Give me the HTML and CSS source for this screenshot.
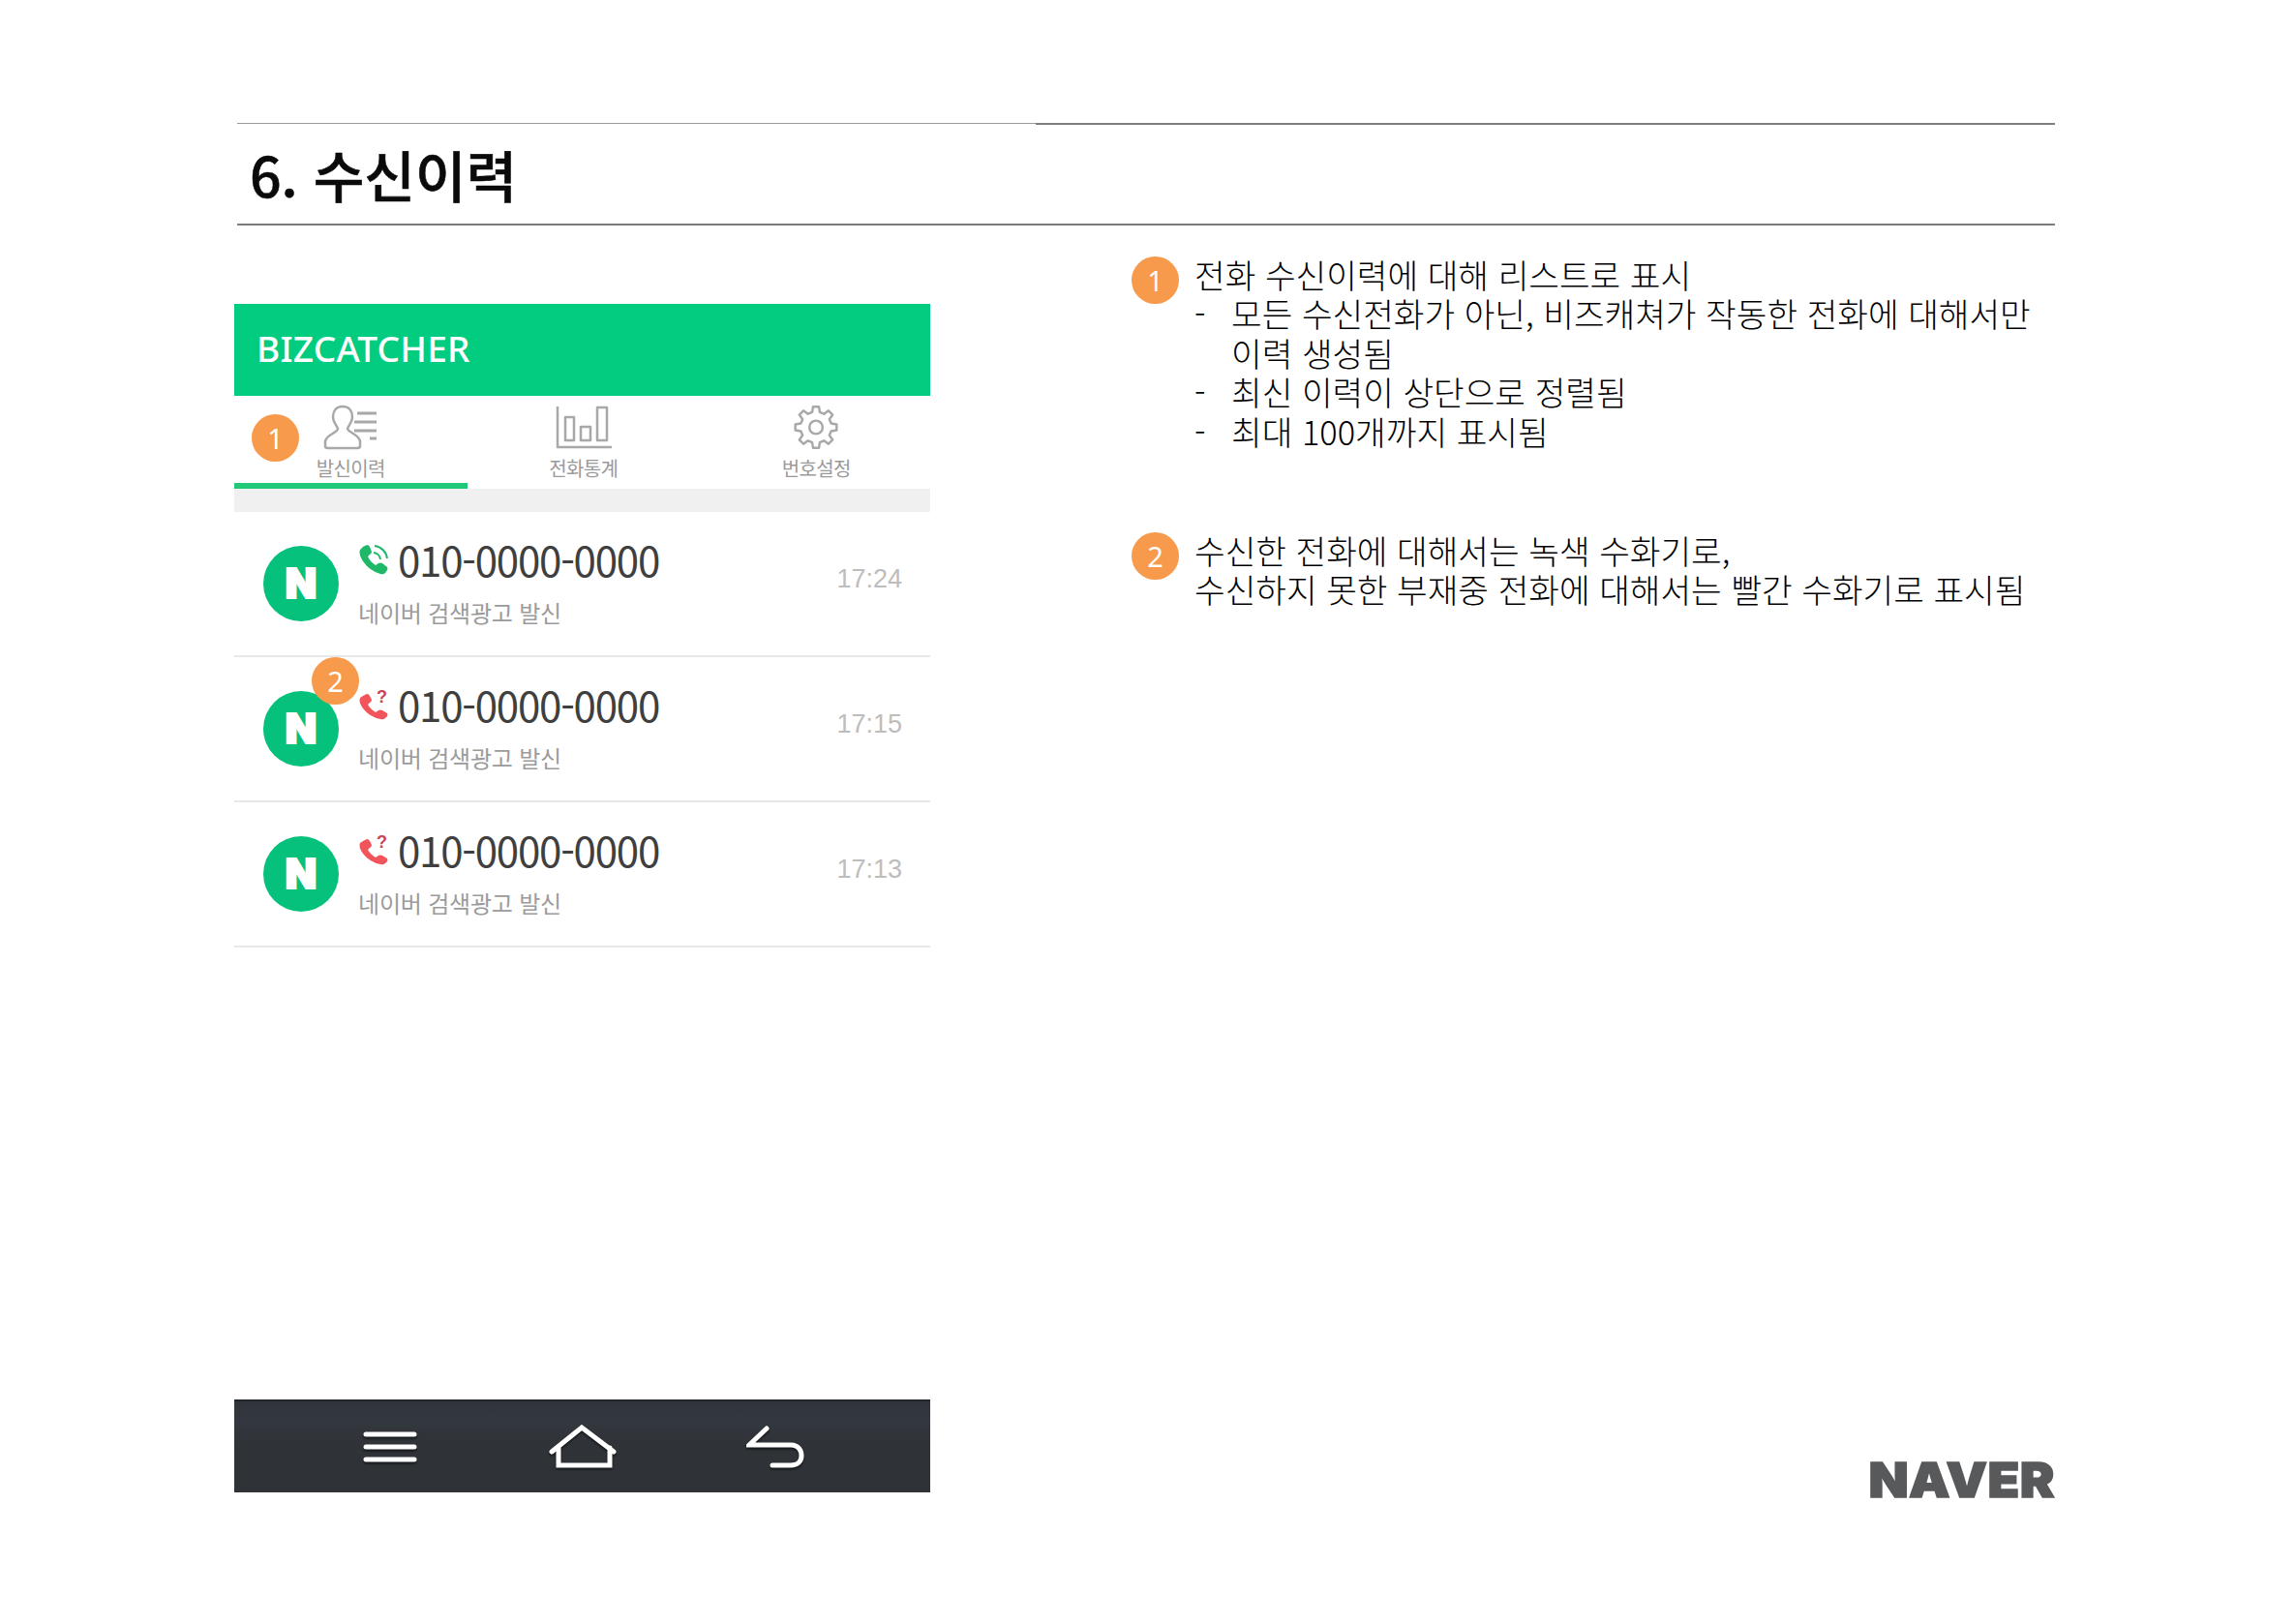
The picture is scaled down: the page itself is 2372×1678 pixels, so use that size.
FILE: index.html
```html
<!DOCTYPE html>
<html lang="ko">
<head>
<meta charset="utf-8">
<title>6. 수신이력</title>
<link rel="stylesheet" href="styles.css">
</head>
<body>
<div class="slide">
  <header class="head">
    <div class="top-rule"><span class="rule-light"></span><span class="rule-dark"></span></div>
    <h1 class="title">6. 수신이력</h1>
  </header>
  <main class="content">
    <section class="phone">
      <div class="appbar">BIZCATCHER</div>
      <nav class="tabs">
        <div class="tab tab-active">
          <svg class="tab-icon" width="56" height="47" viewBox="0 0 56 47"><path d="M20 2C13 2 10 7 10 13C10 19 14 21 15 25C15 29 3 31 2 38V43Q2 45 5 45H35Q38 45 38 43V38C37 31 26 29 25 25C26 21 30 19 30 13C30 7 27 2 20 2Z"/><path class="list-lines" d="M35 9H55M32 18H55M32 27H55M48 35H55"/></svg>
          <span class="tab-label">발신이력</span>
          <span class="badge badge-tab">1</span>
        </div>
        <div class="tab">
          <svg class="tab-icon" width="58" height="47" viewBox="0 0 58 47"><path d="M2 2V44H58M10 13H19V37H10ZM26 23H36V37H26ZM43 3H53V37H43Z"/></svg>
          <span class="tab-label">전화통계</span>
        </div>
        <div class="tab">
          <svg class="tab-icon" width="48" height="48" viewBox="0 0 48 48"><path d="M20 8L20.9 2.2H27.1L28 8L32.5 9.9L37.2 6.4L41.6 10.8L38.1 15.5L40 20L45.8 20.9V27.1L40 28L38.1 32.5L41.6 37.2L37.2 41.6L32.5 38.1L28 40L27.1 45.8H20.9L20 40L15.5 38.1L10.8 41.6L6.4 37.2L9.9 32.5L8 28L2.2 27.1V20.9L8 20L9.9 15.5L6.4 10.8L10.8 6.4L15.5 9.9Z"/><circle cx="24" cy="24" r="7"/></svg>
          <span class="tab-label">번호설정</span>
        </div>
      </nav>
      <div class="spacer-band"></div>
      <ul class="calls">
        <li class="call">
          <span class="avatar">N</span>
          <div class="call-body">
            <div class="call-top">
              <svg class="call-icon icon-green" width="32" height="33" viewBox="0 0 32 33"><path class="handset" d="M5 3L9 1Q11 1 12 3L14 8Q14 10 12 11L10 13Q12 18 18 22L21 20Q23 19 25 20L30 24Q31 26 30 27L28 30Q26 32 23 31Q12 28 5 18Q0 10 2 6Z"/><path class="waves" d="M16 9A8 8 0 0 1 23 16M17 2A15 15 0 0 1 30 15"/></svg>
              <span class="number">010-0000-0000</span>
            </div>
            <div class="call-sub">네이버 검색광고 발신</div>
          </div>
          <time class="call-time">17:24</time>
        </li>
        <li class="call">
          <span class="avatar">N</span>
          <div class="call-body">
            <div class="call-top">
              <svg class="call-icon icon-red" width="32" height="33" viewBox="0 0 32 33"><path class="handset" d="M5 7L9 5Q11 5 12 7L14 11Q14 13 12 14L10 16Q12 20 18 24L21 22Q23 21 25 22L30 25Q31 27 30 28L28 30Q26 32 23 31Q12 29 5 20Q0 13 2 9Z"/><text class="missed" x="19" y="14">?</text></svg>
              <span class="number">010-0000-0000</span>
            </div>
            <div class="call-sub">네이버 검색광고 발신</div>
          </div>
          <time class="call-time">17:15</time>
          <span class="badge badge-row">2</span>
        </li>
        <li class="call">
          <span class="avatar">N</span>
          <div class="call-body">
            <div class="call-top">
              <svg class="call-icon icon-red" width="32" height="33" viewBox="0 0 32 33"><path class="handset" d="M5 7L9 5Q11 5 12 7L14 11Q14 13 12 14L10 16Q12 20 18 24L21 22Q23 21 25 22L30 25Q31 27 30 28L28 30Q26 32 23 31Q12 29 5 20Q0 13 2 9Z"/><text class="missed" x="19" y="14">?</text></svg>
              <span class="number">010-0000-0000</span>
            </div>
            <div class="call-sub">네이버 검색광고 발신</div>
          </div>
          <time class="call-time">17:13</time>
        </li>
      </ul>
      <div class="softkeys">
        <svg class="key" width="56" height="32" viewBox="0 0 56 32"><path d="M3 3H53M3 16H53M3 29H53"/></svg>
        <svg class="key" width="72" height="46" viewBox="0 0 72 46"><path d="M4 28L35 3L68 28M11 24V42H64V24"/></svg>
        <svg class="key" width="60" height="44" viewBox="0 0 60 44"><path d="M21 3L3 20H46C54 20 57 26 57 31C57 37 53 41 46 41H27"/></svg>
      </div>
    </section>
    <aside class="side">
      <div class="notes">
        <div class="note">
          <span class="badge">1</span>
          <div class="note-text">
            <p>전화 수신이력에 대해 리스트로 표시</p>
            <ul class="dash-list">
              <li>모든 수신전화가 아닌, 비즈캐쳐가 작동한 전화에 대해서만<br>이력 생성됨</li>
              <li>최신 이력이 상단으로 정렬됨</li>
              <li>최대 100개까지 표시됨</li>
            </ul>
          </div>
        </div>
        <div class="note">
          <span class="badge">2</span>
          <div class="note-text">
            <p>수신한 전화에 대해서는 녹색 수화기로,</p>
            <p>수신하지 못한 부재중 전화에 대해서는 빨간 수화기로 표시됨</p>
          </div>
        </div>
      </div>
      <div class="logo">NAVER</div>
    </aside>
  </main>
</div>
</body>
</html>
```
FILE: styles.css
```css
* { box-sizing: border-box; }
html, body { margin: 0; padding: 0; background: #fff; }
body { font-family: "Noto Sans CJK KR", "Noto Sans", sans-serif; color: #111; }
ul { list-style: none; margin: 0; padding: 0; }
p { margin: 0; }

.slide {
  width: 2372px;
  height: 1678px;
  padding-top: 127px;
  display: flex;
  flex-direction: column;
  overflow: hidden;
}

/* header */
.head {
  margin-left: 245px;
  width: 1878px;
  height: 106px;
  border-bottom: 2px solid #7b7b7b;
}
.top-rule { display: flex; height: 2px; align-items: flex-start; }
.rule-light { width: 825px; height: 1px; background: #9a9a9a; }
.rule-dark { flex: 1; height: 2px; background: #7d7d7d; }
.title {
  margin: 0;
  padding-left: 13px;
  font-size: 57.2px;
  font-weight: 500;
  line-height: 100px;
  color: #0a0a0a;
  -webkit-text-stroke: 0.6px #0a0a0a;
}

/* layout */
.content {
  display: flex;
  align-items: flex-start;
  padding-left: 242px;
  height: 1315px;
}

/* phone */
.phone {
  width: 719px;
  height: 1228px;
  margin-top: 81px;
  display: flex;
  flex-direction: column;
}
.appbar {
  height: 95px;
  background: #02cc80;
  color: #fff;
  font-family: "Noto Sans", sans-serif;
  font-size: 37px;
  font-weight: 500;
  line-height: 92px;
  padding-left: 23px;
  letter-spacing: 0.2px;
}
.tabs { display: flex; height: 96px; }
.tab {
  position: relative;
  flex: 0 0 240.5px;
  display: flex;
  flex-direction: column;
  align-items: center;
  padding-top: 9px;
}
.tab-active { border-bottom: 6px solid #1fc977; }
.tab-icon { height: 47px; fill: none; stroke: #a8a8a8; stroke-width: 2.5; stroke-linejoin: round; }
.list-lines { stroke-width: 3; }
.tab-label {
  margin-top: 5px;
  font-size: 20px;
  line-height: 28px;
  color: #9a9a9a;
  letter-spacing: -0.6px;
}
.spacer-band { height: 24px; background: #f0f0f0; }

.calls { flex: 1; }
.call {
  position: relative;
  height: 150px;
  border-bottom: 2px solid #e8e8e8;
  display: flex;
  align-items: center;
  padding: 0 29px 0 30px;
}
.avatar {
  width: 78px;
  height: 78px;
  flex: none;
  border-radius: 50%;
  background: #05c17c;
  color: #fff;
  font-family: "Inter", sans-serif;
  font-size: 42px;
  font-weight: 900;
  line-height: 78px;
  text-align: center;
  -webkit-text-stroke: 2px #fff;
}
.call-body { flex: 1; margin-left: 20px; }
.call-top { display: flex; align-items: center; height: 50px; margin-top: -3px; }
.call-icon { flex: none; margin-right: 9px; margin-top: 1px; }
.icon-green .handset { fill: #1fb868; }
.icon-red .handset { fill: #f2545b; }
.waves { fill: none; stroke: #1fb868; stroke-width: 2; }
.missed { font-family: "Liberation Sans", sans-serif; font-size: 18px; font-weight: 700; fill: #c8455a; }
.number {
  font-family: "Noto Sans CJK KR", sans-serif;
  font-size: 42px;
  font-weight: 400;
  line-height: 50px;
  color: #3f3f3f;
  letter-spacing: -1.2px;
}
.call-sub {
  margin-top: 13px;
  font-size: 24px;
  line-height: 34px;
  color: #9b9b9b;
  letter-spacing: -0.2px;
}
.call-time {
  font-family: "Liberation Sans", sans-serif;
  font-size: 27px;
  color: #bdbdbd;
  margin-bottom: 10px;
}

.softkeys {
  height: 96px;
  border-top: 2px solid #23262a;
  background: linear-gradient(#30343a, #33373f 20%, #2f3337 50%);
  display: grid;
  grid-template-columns: 1fr 1fr 1fr;
  padding: 0 61px;
  justify-items: center;
  align-items: center;
}
.key {
  fill: none;
  stroke: #fff;
  stroke-width: 5;
  stroke-linecap: round;
  filter: drop-shadow(0 2px 1px #15171a);
}

/* badges */
.badge {
  flex: none;
  display: block;
  width: 49px;
  height: 49px;
  border-radius: 50%;
  background: #f89a4b;
  color: #fff;
  font-family: "Noto Sans", sans-serif;
  font-size: 29px;
  line-height: 49px;
  text-align: center;
}
.badge-tab { position: absolute; left: 18px; top: 19px; }
.badge-row { position: absolute; left: 80px; top: 0; }

/* right side */
.side {
  width: 954px;
  height: 1315px;
  margin-left: 208px;
  display: flex;
  flex-direction: column;
  justify-content: space-between;
}
.notes { padding-top: 32px; display: flex; flex-direction: column; gap: 85px; }
.note { display: flex; gap: 16px; align-items: flex-start; }
.note-text {
  font-size: 34.4px;
  font-weight: 300;
  line-height: 40.4px;
  color: #000;
  margin-top: -2px;
}
.dash-list li { position: relative; padding-left: 38px; }
.dash-list li::before { content: "-"; position: absolute; left: 0; top: 0; }

.logo {
  align-self: flex-end;
  width: max-content;
  font-family: "Inter", sans-serif;
  font-size: 50px;
  font-weight: 900;
  line-height: 38px;
  color: #58595b;
  letter-spacing: 0.5px;
  -webkit-text-stroke: 1.5px #58595b;
  transform: scaleX(1.07);
  transform-origin: right center;
}
```
